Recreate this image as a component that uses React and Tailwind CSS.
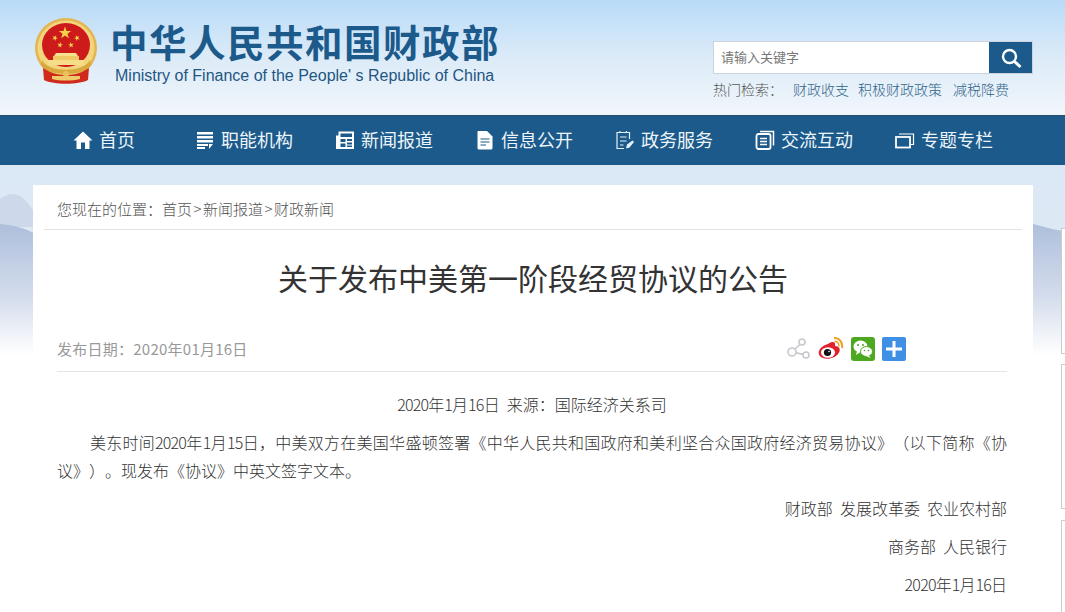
import React from "react";

const cjk = { fontFamily: '"Noto Sans CJK SC", "Liberation Sans", sans-serif' };

function Emblem() {
  const star = (cx, cy, r, rot = 0) => {
    const pts = [];
    for (let i = 0; i < 10; i++) {
      const a = ((-90 + rot + i * 36) * Math.PI) / 180;
      const rr = i % 2 ? r * 0.4 : r;
      pts.push(`${(cx + rr * Math.cos(a)).toFixed(2)},${(cy + rr * Math.sin(a)).toFixed(2)}`);
    }
    return <polygon points={pts.join(" ")} fill="#f5d24a" />;
  };
  return (
    <svg width="64" height="68" viewBox="0 0 64 68" className="block">
      <ellipse cx="32" cy="30" rx="31" ry="30" fill="#e2b651" />
      <ellipse cx="32" cy="30" rx="28.5" ry="27.5" fill="#f2d57c" />
      <ellipse cx="32" cy="27" rx="24" ry="22" fill="#cd1b1b" />
      {star(31, 15, 6.5)}
      {star(21, 20, 3, 25)}
      {star(43, 20, 3, -25)}
      {star(26, 27, 3, 10)}
      {star(37, 27, 3, -10)}
      <path d="M22 35 H42 L44 38 H20 Z" fill="#f7e08e" />
      <rect x="19" y="38" width="26" height="4" fill="#eec965" />
      <rect x="14" y="42" width="36" height="5" fill="#f6dd8a" />
      <path d="M8 42 C14 55 50 55 56 42 L57 47 C51 59 13 59 7 47 Z" fill="#d9a93f" />
      <path d="M9 50 L16 54 C24 58 40 58 48 54 L55 50 L54 62 C44 67 20 67 10 62 Z" fill="#cf2a1c" />
      <path d="M18 58 H46 V61 C38 63 26 63 18 61 Z" fill="#efcc6a" />
      <circle cx="32" cy="56" r="3" fill="#e9c25c" />
    </svg>
  );
}

const White = ({ children, w = 20, h = 20 }) => (
  <svg width={w} height={h} viewBox="0 0 20 20" className="block shrink-0">
    {children}
  </svg>
);

const icons = [
  <White key="a">
    <path d="M10 1.5 L19.5 10.5 H16.5 V19 H12 V12.5 H8 V19 H3.5 V10.5 H0.5 Z" fill="#fff" />
  </White>,
  <White key="b">
    <path d="M2 2 H18 V4.5 H2 Z M2 6 H18 V8.5 H2 Z M2 10 H18 V12.5 H2 Z M2 14 H13 V16 H2 Z M2 17 H10 V19 H2 Z M14 14 H18 L14 19 Z" fill="#fff" />
  </White>,
  <White key="c">
    <path d="M3.5 1.5 H19 V19 H1 V5.5 H3.5 Z" fill="#fff" />
    <path d="M5.5 3.5 H17 V7 H5.5 Z M5.5 9 H10.5 V12 H5.5 Z M12 9 H17 V11 H12 Z M12 12.5 H17 V14.5 H12 Z M5.5 13.5 H10.5 V17 H5.5 Z M12 15.5 H17 V17 H12 Z" fill="#1b5a8a" />
  </White>,
  <White key="d">
    <path d="M3 1 H12 L17.5 6.5 V18 Q17.5 19.5 16 19.5 H4 Q2.5 19.5 2.5 18 V2 Q2.5 1 3 1 Z" fill="#fff" />
    <path d="M5.5 9 H14.5 M5.5 12 H14.5 M5.5 15 H11" stroke="#1b5a8a" strokeWidth="1.1" />
  </White>,
  <White key="e">
    <path d="M14.5 9 V2.5 H2 V18.5 H9 M5 2.5 V1 M11.5 2.5 V1 M5 7 H11.5 M5 11 H11.5 M5 15 H8.5" stroke="#e6f1f8" strokeWidth="1.2" fill="none" />
    <path d="M11 18.5 L12 14.5 L17.5 10.5 L19 12 L14.5 17.5 Z" fill="#e6f1f8" />
  </White>,
  <White key="f">
    <rect x="1.5" y="4" width="14" height="15" rx="2" stroke="#fff" strokeWidth="1.8" fill="none" />
    <path d="M5 1.5 H18.5 V15.5" stroke="#fff" strokeWidth="1.5" fill="none" />
    <path d="M5 8.5 H12 M5 11.5 H12 M5 14.5 H12" stroke="#fff" strokeWidth="1.4" />
  </White>,
  <White key="g">
    <rect x="1" y="7" width="14" height="10.5" stroke="#fff" strokeWidth="1.8" fill="none" />
    <path d="M4 4 H18.5 V14.5 H16" stroke="#fff" strokeWidth="1.2" fill="none" />
  </White>,
];

const nav = ["首页", "职能机构", "新闻报道", "信息公开", "政务服务", "交流互动", "专题专栏"];

function Mountains() {
  return (
    <svg width="1065" height="190" viewBox="0 0 1065 190" className="block" preserveAspectRatio="none">
      <defs>
        <linearGradient id="mtn" x1="0" y1="0" x2="0" y2="1">
          <stop offset="0" stopColor="#aebfdc" />
          <stop offset="0.55" stopColor="#d3dcec" />
          <stop offset="1" stopColor="#ffffff" />
        </linearGradient>
      </defs>
      <path d="M0 34 C12 25 22 28 33 45 L33 62 H0 Z" fill="#cdd9ea" />
      <path d="M0 59 C14 60 24 63 36 69 L36 190 H0 Z" fill="url(#mtn)" />
      <path d="M1030 58 C1042 61 1052 65 1065 66 V190 H1030 Z" fill="url(#mtn)" />
    </svg>
  );
}

function Share() {
  return (
    <svg width="24" height="24" viewBox="0 0 24 24" className="block" fill="none" stroke="#c6c8cd" strokeWidth="1.6">
      <circle cx="5" cy="15" r="4" />
      <circle cx="15" cy="5" r="3" />
      <circle cx="19" cy="18" r="3" />
      <path d="M8 12 L13 7.5 M9 15.8 L16 17.4" />
    </svg>
  );
}

function Weibo() {
  return (
    <svg width="26" height="24" viewBox="0 0 26 24" className="block">
      <path d="M10 7 C15 3.5 18 5 17 9 C21 9 23 12 21 15.5 C18 21 10 23 5 21 C0 19 0 15 2 12 C4 9.5 7 7.5 10 7 Z" fill="#e0202c" />
      <ellipse cx="10" cy="15.5" rx="7" ry="5.2" fill="#fff" />
      <circle cx="9.5" cy="15.5" r="3.6" fill="#111" />
      <circle cx="11" cy="14.5" r="0.8" fill="#fff" />
      <path d="M16 1 C21 0.5 25 5 24 11" stroke="#f0a020" strokeWidth="2" fill="none" />
      <path d="M16.5 4.5 C19 4 21.5 6.5 20.8 9.5" stroke="#f0a020" strokeWidth="1.6" fill="none" />
    </svg>
  );
}

function Wechat() {
  return (
    <svg width="24" height="24" viewBox="0 0 24 24" className="block">
      <rect width="24" height="24" rx="3" fill="#4ca81e" />
      <ellipse cx="9.5" cy="9.5" rx="7" ry="6" fill="#fff" />
      <path d="M6 14 L5 18 L9.5 15 Z" fill="#fff" />
      <ellipse cx="15.5" cy="14.5" rx="6" ry="5" fill="#fff" stroke="#4ca81e" strokeWidth="1" />
      <path d="M18 18.5 L19.5 21 L15 19 Z" fill="#fff" />
      <circle cx="7" cy="8" r="1" fill="#4ca81e" />
      <circle cx="12" cy="8" r="1" fill="#4ca81e" />
      <circle cx="13.5" cy="13.5" r="0.8" fill="#4ca81e" />
      <circle cx="17.5" cy="13.5" r="0.8" fill="#4ca81e" />
    </svg>
  );
}

function Plus() {
  return (
    <svg width="24" height="24" viewBox="0 0 24 24" className="block">
      <rect width="24" height="24" rx="2" fill="#3f90e4" />
      <path d="M4 10.5 H10.5 V4 H13.5 V10.5 H20 V13.5 H13.5 V20 H10.5 V13.5 H4 Z" fill="#fff" />
    </svg>
  );
}

const Num = ({ children }) => <span className="tracking-[-0.8px]">{children}</span>;

export default function App() {
  return (
    <div className="relative h-[612px] w-[1065px] overflow-hidden bg-white" style={cjk}>
      <header className="flex h-[115px] bg-gradient-to-b from-[#b9dbf8] via-[#dcebf8] to-[#f1f6fb]">
        <div className="ml-[34px] mt-[18px] shrink-0">
          <Emblem />
        </div>
        <div className="ml-[12px] mt-[19px] w-[402px] shrink-0">
          <div className="text-[37.5px] font-bold leading-[44px] tracking-[1.5px] text-[#1b5a8a] whitespace-nowrap">中华人民共和国财政部</div>
          <div className="ml-[5px] mt-[3px] text-[16px] leading-[20px] text-[#1f5683] whitespace-nowrap" style={{ fontFamily: '"Liberation Sans", sans-serif' }}>
            Ministry of Finance of the People' s Republic of China
          </div>
        </div>
        <div className="ml-[201px] mt-[41px] w-[320px] shrink-0">
          <div className="flex h-[33px] border border-[#ccd3dc] bg-white">
            <div className="flex-1 pl-[7px] text-[13px] leading-[30px] text-[#777]">请输入关键字</div>
            <div className="flex w-[43px] items-center justify-center bg-[#1b5a8a]">
              <svg width="24" height="24" viewBox="0 0 24 24" fill="none" stroke="#fff" strokeWidth="2.4">
                <circle cx="10.5" cy="10.5" r="6.5" />
                <path d="M15.5 15.5 L21.5 21" strokeWidth="3" />
              </svg>
            </div>
          </div>
          <div className="mt-[5px] flex text-[14px] font-light leading-[20px] text-[#555] whitespace-nowrap">
            <span className="w-[80px]">热门检索：</span>
            <span className="w-[65px] text-[#2f6489]">财政收支</span>
            <span className="w-[95px] text-[#2f6489]">积极财政政策</span>
            <span className="text-[#2f6489]">减税降费</span>
          </div>
        </div>
      </header>

      <nav className="flex h-[50px] items-center gap-[42px] border-t border-[#2a4d68] bg-[#1b5a8a] pb-[2px] pl-[73px] text-[18px] text-[#eef5fa]">
        {nav.map((t, i) => (
          <div key={t} className={`flex items-center gap-[6px] whitespace-nowrap ${i === 0 ? "mr-[18px]" : ""}`}>
            {icons[i]}
            <span>{t}</span>
          </div>
        ))}
      </nav>

      <main className="relative pt-[20px]">
        <div className="absolute inset-x-0 top-0 h-[190px] bg-gradient-to-b from-[#dbe8f6] to-[#e3e9f3]">
          <Mountains />
        </div>

        <div className="absolute left-[1061px] top-[63px] h-[126px] w-[10px] border border-[#ccc] bg-white" />
        <div className="absolute left-[1061px] top-[199px] h-[145px] w-[10px] border border-[#ccc] bg-white" />
        <div className="absolute left-[1061px] top-[355px] h-[100px] w-[10px] border border-[#ccc] bg-white" />

        <article className="relative mx-[33px] h-[500px] w-[1000px] bg-white">
          <div className="mx-[11px] h-[45px] border-b border-[#e3e3e3] pl-[13px] pt-[14px] text-[15px] font-light leading-[20px] text-[#555]">
            您现在的位置：首页<span className="px-[1.5px]">&gt;</span>新闻报道<span className="px-[1.5px]">&gt;</span>财政新闻
          </div>
          <h1 className="mt-[25px] text-center text-[30px] font-normal leading-[44px] text-[#333]">关于发布中美第一阶段经贸协议的公告</h1>
          <div className="ml-[24px] mr-[26px] mt-[28px] flex h-[45px] items-center justify-between border-b border-[#e5e5e5]">
            <div className="text-[15px] tracking-[0.25px] text-[#999]">发布日期：2020年01月16日</div>
            <div className="mr-[101px] flex items-center gap-[7px]">
              <Share />
              <Weibo />
              <Wechat />
              <Plus />
            </div>
          </div>
          <div className="ml-[24px] mr-[26px] text-[16px] font-light text-[#333] [text-spacing-trim:space-all]">
            <p className="mt-[18px] text-center leading-[28px]"><Num>2020</Num>年<Num>1</Num>月<Num>16</Num>日&nbsp;&nbsp;来源：国际经济关系司</p>
            <p className="mt-[10px] leading-[28px] indent-[33px] [text-align:justify]">
              美东时间<Num>2020</Num>年<Num>1</Num>月<Num>15</Num>日，中美双方在美国华盛顿签署《中华人民共和国政府和美利坚合众国政府经济贸易协议》（以下简称《协议》）。现发布《协议》中英文签字文本。
            </p>
            <p className="mt-[5px] text-right leading-[38px]">财政部&nbsp;&nbsp;发展改革委&nbsp;&nbsp;农业农村部</p>
            <p className="text-right leading-[38px]">商务部&nbsp;&nbsp;人民银行</p>
            <p className="text-right leading-[38px]"><Num>2020</Num>年<Num>1</Num>月<Num>16</Num>日</p>
          </div>
        </article>
      </main>
    </div>
  );
}
